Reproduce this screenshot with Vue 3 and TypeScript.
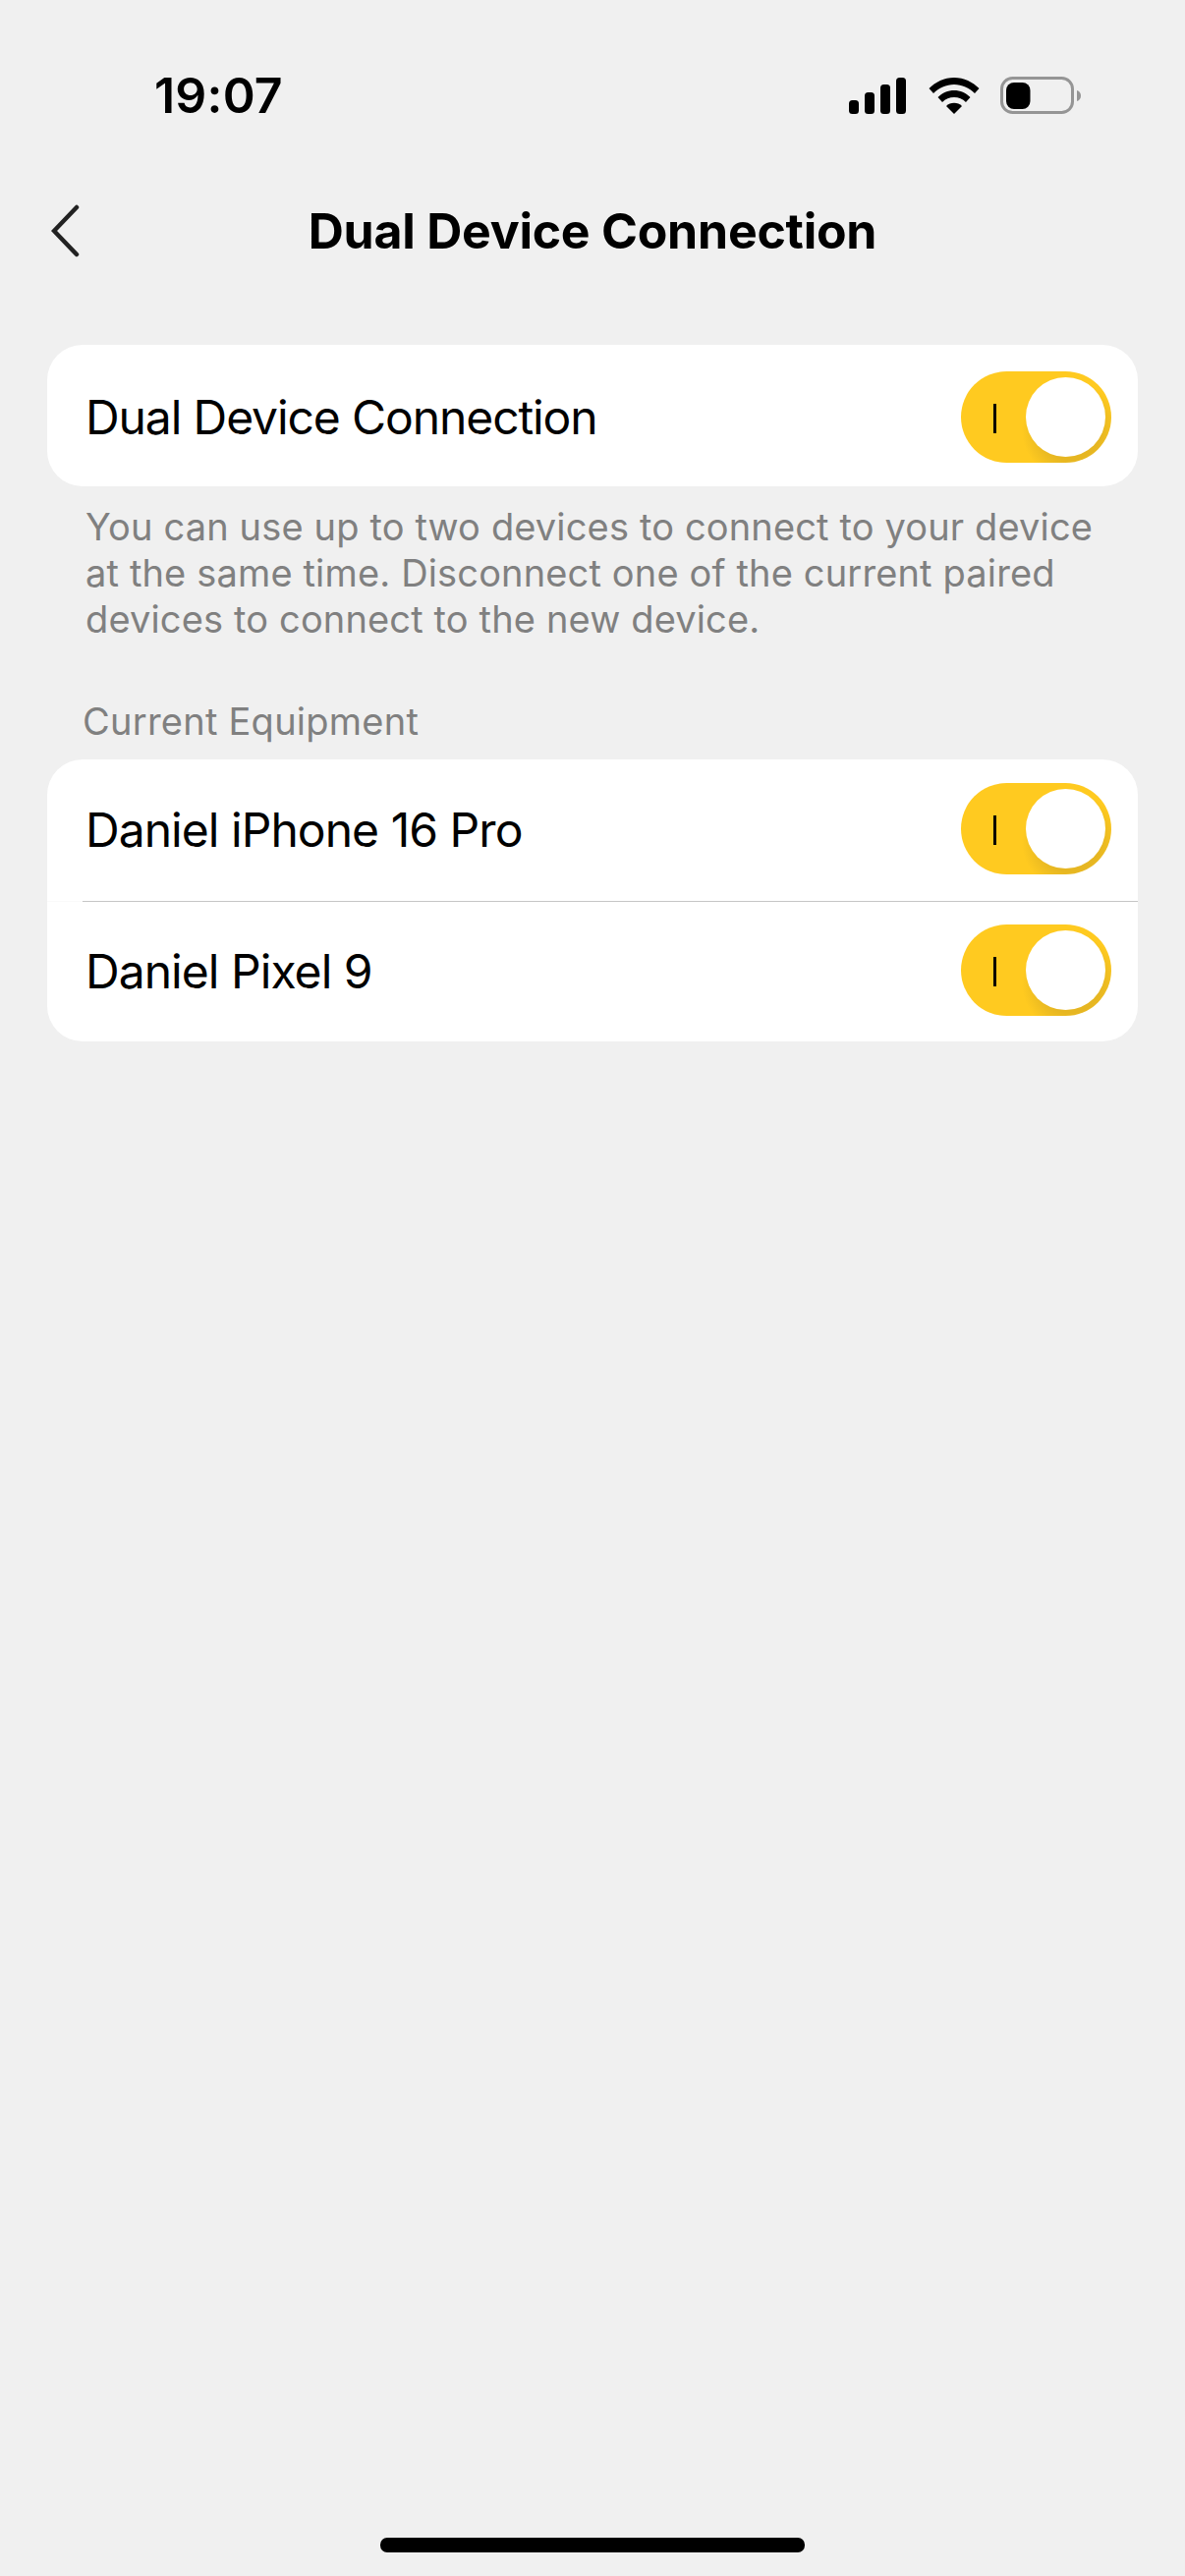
<script setup lang="ts">
const devices = ['Daniel iPhone 16 Pro', 'Daniel Pixel 9']
</script>

<template>
  <div class="screen">
    <div class="status-bar">
      <span class="time">19:07</span>
      <div class="status-icons">
        <svg class="signal" width="59" height="38" viewBox="0 0 59 38">
          <rect x="0" y="23" width="10" height="14" rx="3.5" />
          <rect x="16" y="15" width="10" height="22" rx="3.5" />
          <rect x="32" y="7" width="10" height="30" rx="3.5" />
          <rect x="48" y="0" width="10" height="37" rx="3.5" />
        </svg>
        <svg class="wifi" width="52" height="38" viewBox="0 0 52 38">
          <path d="M0.5 11C7 4.500 16 0 26 0s19 4.500 25.500 11l-4.500 5C41.500 10.500 34 7 26 7S10.500 10.500 5 16z" />
          <path d="M9.500 20C14 15.500 19.800 13 26 13s12 2.500 16.500 7l-4.500 5C34.800 21.800 30.500 20 26 20s-8.800 1.800-12 5z" />
          <path d="M18 29c2-2 5-3.200 8-3.200s6 1.200 8 3.200l-8 8z" />
        </svg>
        <svg class="battery" width="82" height="38" viewBox="0 0 82 38">
          <rect x="1.500" y="1.500" width="72" height="35" rx="11" fill="none" stroke="#959595" stroke-width="3" />
          <rect x="6" y="6" width="24.500" height="27" rx="8" fill="#000" />
          <path d="M78 14c2.500.8 4 2.500 4 5.500s-1.500 4.700-4 5.500z" fill="#959595" />
        </svg>
      </div>
    </div>

    <header class="nav">
      <svg class="back" width="32" height="54" viewBox="0 0 32 54">
        <path d="M26 3L3 27l23 24" fill="none" stroke="#222" stroke-width="4.500" stroke-linecap="round" stroke-linejoin="miter" />
      </svg>
      <h1 class="title">Dual Device Connection</h1>
    </header>

    <main class="content">
      <section class="card">
        <div class="row">
          <span class="label">Dual Device Connection</span>
          <div class="toggle"><i class="mark"></i><i class="knob"></i></div>
        </div>
      </section>

      <p class="hint">You can use up to two devices to connect to your device at the same time. Disconnect one of the current paired devices to connect to the new device.</p>

      <div class="section-title">Current Equipment</div>

      <section class="card">
        <div v-for="d in devices" :key="d" class="row device">
          <span class="label">{{ d }}</span>
          <div class="toggle"><i class="mark"></i><i class="knob"></i></div>
        </div>
      </section>
    </main>

    <div class="home-indicator"></div>
  </div>
</template>

<style>
html,
body {
  margin: 0;
  background: #f0f0f0;
}
</style>

<style scoped>
.screen {
  position: relative;
  width: 1206px;
  height: 2622px;
  background: #f0f0f0;
  font-family: Inter, 'Liberation Sans', sans-serif;
  color: #000;
  overflow: hidden;
}

.status-bar {
  height: 194px;
  box-sizing: border-box;
  padding: 64px 106px 0 157px;
  display: flex;
  justify-content: space-between;
  align-items: flex-start;
}

.time {
  font-size: 50px;
  line-height: 66px;
  font-weight: 600;
  letter-spacing: 0.2px;
}

.status-icons {
  display: flex;
  align-items: flex-start;
  gap: 22px;
  margin-top: 15px;
}

.signal {
  fill: #000;
}

.wifi {
  fill: #000;
}

.battery {
  margin: -1px 0 0 -1px;
}

.nav {
  position: relative;
  height: 82px;
  display: flex;
  align-items: center;
  justify-content: center;
}

.back {
  position: absolute;
  left: 52px;
  top: 14px;
}

.title {
  margin: 0;
  font-size: 50px;
  font-weight: 700;
  letter-spacing: -0.25px;
}

.content {
  padding: 75px 48px 0;
}

.card {
  background: #fff;
  border-radius: 36px;
  overflow: hidden;
}

.row {
  height: 144px;
  box-sizing: border-box;
  padding: 0 27px 0 39px;
  display: flex;
  align-items: center;
  justify-content: space-between;
  position: relative;
}

.label {
  margin-top: 2px;
  font-size: 48px;
  letter-spacing: -1.1px;
}

.toggle {
  position: relative;
  width: 153px;
  height: 93px;
  margin-top: 3px;
  border-radius: 47px;
  background: radial-gradient(circle at 112px 60px, #e6b622 30px, #f2c021 40px, #ffca20 50px);
}

.device {
  align-items: flex-start;
}

.device .label {
  margin-top: 42px;
  letter-spacing: -0.95px;
}

.device .toggle {
  margin-top: 24px;
}

.device + .device {
  height: 143px;
}

.device + .device::before {
  content: '';
  position: absolute;
  left: 0;
  right: 0;
  top: 0;
  height: 1px;
  background: linear-gradient(to right, #fafafa 36px, #c6c6c6 36px);
}

.mark {
  position: absolute;
  left: 33px;
  top: 33px;
  width: 3px;
  height: 30px;
  background: #000;
}

.knob {
  position: absolute;
  left: 66px;
  top: 6px;
  width: 81px;
  height: 81px;
  border-radius: 50%;
  background: #fff;
}

.hint {
  margin: 18px 0 0;
  padding: 0 30px 0 39px;
  font-size: 38px;
  line-height: 47px;
  letter-spacing: 0.15px;
  color: #808080;
}

.section-title {
  margin: 57px 0 0 36px;
  height: 62px;
  font-size: 38px;
  line-height: 46px;
  letter-spacing: 0.25px;
  color: #808080;
}

.home-indicator {
  position: absolute;
  left: 387px;
  bottom: 24px;
  width: 432px;
  height: 15px;
  border-radius: 7px;
  background: #000;
}
</style>
